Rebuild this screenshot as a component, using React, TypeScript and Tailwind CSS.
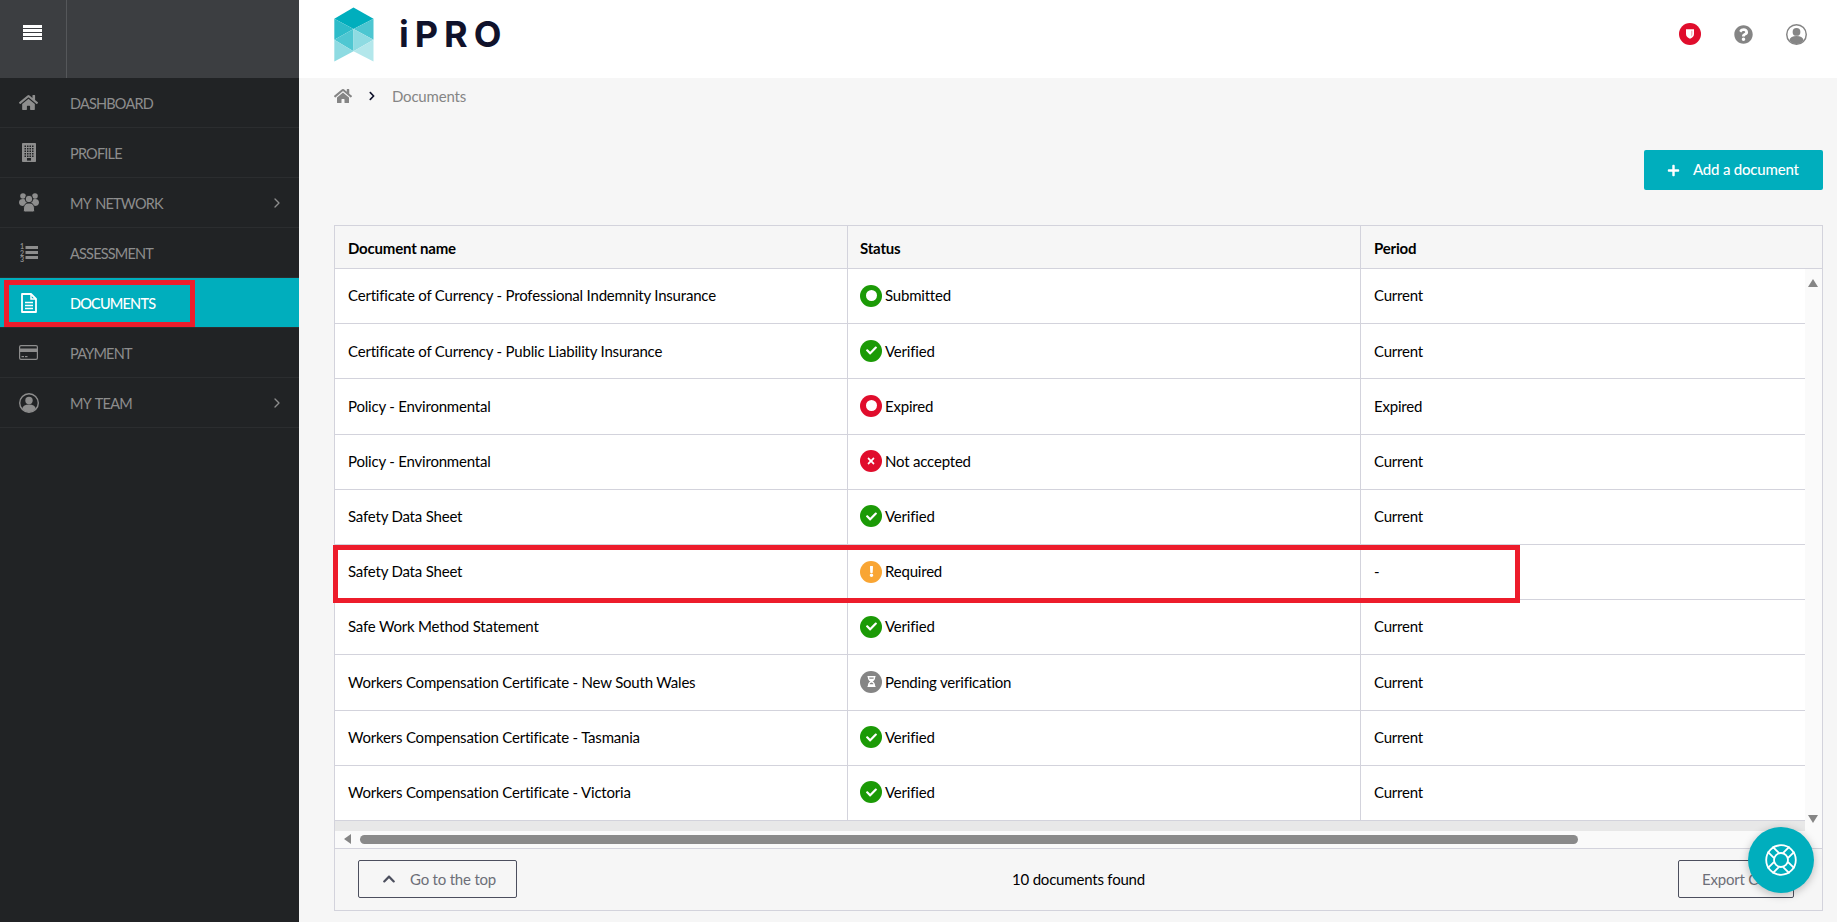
import React from 'react';
import {
  FaHome, FaChevronRight, FaPlus, FaQuestionCircle, FaCheck, FaTimes, FaExclamation,
  FaHourglassHalf, FaChevronUp,
} from 'react-icons/fa';
import { LuChevronRight } from 'react-icons/lu';

const BuildingIcon = () => {
  const windows = [];
  for (let r = 0; r < 5; r++) {
    for (let c = 0; c < 4; c++) {
      windows.push(<rect key={`${r}-${c}`} x={2.5 + c * 2.5} y={2.5 + r * 2.5} width="1.5" height="1.5" fill="#212325" />);
    }
  }
  return (
    <svg width="14" height="19" viewBox="0 0 14 19">
      <rect width="14" height="19" rx="0.8" fill="currentColor" />
      {windows}
      <rect x="5" y="15" width="4" height="2.6" fill="#212325" />
    </svg>
  );
};

const UsersIcon = () => (
  <svg width="20" height="19" viewBox="0 0 20 19" fill="currentColor">
    <circle cx="4" cy="3" r="2.8" />
    <circle cx="16" cy="3" r="2.8" />
    <path d="M0 9.5C0 7 1.5 6 4 6s4 1 4 3.5S6 13 4 13 0 12 0 9.5zM12 9.5C12 7 13.5 6 16 6s4 1 4 3.5S18 13 16 13s-4-1-4-3.500z" />
    <circle cx="10" cy="6" r="3.8" stroke="#212325" strokeWidth="1" />
    <path d="M4.500 16c0-4 2-6 5.500-6s5.500 2 5.500 6v1.500c0 1-1 1.500-2 1.500h-7c-1 0-2-.5-2-1.500z" stroke="#212325" strokeWidth="1" />
  </svg>
);

const ListIcon = () => (
  <svg width="18" height="19" viewBox="0 0 18 19" fill="currentColor">
    <rect x="5.500" y="3" width="12.500" height="3" />
    <rect x="5.500" y="8" width="12.500" height="3" />
    <rect x="5.500" y="13" width="12.500" height="3" />
    <text x="0" y="6" fontSize="7" fontWeight="700">1</text>
    <text x="0" y="12.500" fontSize="7" fontWeight="700">2</text>
    <text x="0" y="19" fontSize="7" fontWeight="700">3</text>
  </svg>
);

const FileIcon = () => (
  <svg width="16" height="20" viewBox="0 0 16 20" fill="none" stroke="currentColor">
    <path d="M1 1h9l5 5v13H1z" strokeWidth="1.800" strokeLinejoin="round" />
    <path d="M10 1v5h5" strokeWidth="1.500" />
    <path d="M4 9.500h8M4 12.500h8M4 15.500h8" strokeWidth="1.600" />
  </svg>
);

const CardIcon = () => (
  <svg width="19" height="15" viewBox="0 0 19 15" fill="currentColor">
    <path d="M2 0h15a2 2 0 0 1 2 2v11a2 2 0 0 1-2 2H2a2 2 0 0 1-2-2V2a2 2 0 0 1 2-2zm-.800 7v6c0 .5.300.800.800.800h15c.5 0 .800-.300.800-.800V7zm0-3.500h16.600V2c0-.5-.300-.800-.800-.800H2c-.5 0-.800.300-.800.800z" fillRule="evenodd" />
    <rect x="2.500" y="11" width="2.500" height="1.200" />
    <rect x="6" y="11" width="2.500" height="1.200" />
  </svg>
);

const UserIcon = ({ size = 20, bg = '#212325' }: { size?: number; bg?: string }) => (
  <svg width={size} height={size} viewBox="0 0 20 20">
    <circle cx="10" cy="10" r="9.300" fill={bg} stroke="currentColor" strokeWidth="1.400" />
    <circle cx="10" cy="7.500" r="3.700" fill="currentColor" />
    <path d="M3.200 15.500c.8-2.800 3-4 6.800-4s6 1.200 6.800 4c-1.600 2.200-4 3.500-6.800 3.500s-5.200-1.300-6.800-3.500z" fill="currentColor" />
  </svg>
);

const LifeRing = () => (
  <svg width="34" height="34" viewBox="0 0 34 34" fill="none" stroke="white" strokeWidth="1.800">
    <circle cx="17" cy="17" r="14.800" />
    <circle cx="17" cy="17" r="7" />
    {[45, 135, 225, 315].map((a) => (
      <path key={a} d="M13.500 10.800V1.500M20.500 10.800V1.500" transform={`rotate(${a} 17 17)`} />
    ))}
  </svg>
);

const navItems = [
  { label: 'DASHBOARD', icon: <FaHome size={19} /> },
  { label: 'PROFILE', icon: <BuildingIcon /> },
  { label: 'MY NETWORK', icon: <UsersIcon />, more: true },
  { label: 'ASSESSMENT', icon: <ListIcon /> },
  { label: 'DOCUMENTS', icon: <FileIcon />, active: true },
  { label: 'PAYMENT', icon: <CardIcon /> },
  { label: 'MY TEAM', icon: <UserIcon />, more: true },
];

type Status = 'submitted' | 'verified' | 'expired' | 'rejected' | 'required' | 'pending';

const rows: { name: string; status: Status; label: string; period: string }[] = [
  { name: 'Certificate of Currency - Professional Indemnity Insurance', status: 'submitted', label: 'Submitted', period: 'Current' },
  { name: 'Certificate of Currency - Public Liability Insurance', status: 'verified', label: 'Verified', period: 'Current' },
  { name: 'Policy - Environmental', status: 'expired', label: 'Expired', period: 'Expired' },
  { name: 'Policy - Environmental', status: 'rejected', label: 'Not accepted', period: 'Current' },
  { name: 'Safety Data Sheet', status: 'verified', label: 'Verified', period: 'Current' },
  { name: 'Safety Data Sheet', status: 'required', label: 'Required', period: '-' },
  { name: 'Safe Work Method Statement', status: 'verified', label: 'Verified', period: 'Current' },
  { name: 'Workers Compensation Certificate - New South Wales', status: 'pending', label: 'Pending verification', period: 'Current' },
  { name: 'Workers Compensation Certificate - Tasmania', status: 'verified', label: 'Verified', period: 'Current' },
  { name: 'Workers Compensation Certificate - Victoria', status: 'verified', label: 'Verified', period: 'Current' },
];

const StatusIcon = ({ status }: { status: Status }) => {
  if (status === 'submitted' || status === 'expired') {
    return (
      <span className={`w-[22px] h-[22px] rounded-full flex items-center justify-center ${status === 'submitted' ? 'bg-[#1b9a06]' : 'bg-[#e00d2c]'}`}>
        <span className="w-[11px] h-[11px] rounded-full bg-white" />
      </span>
    );
  }
  const bg = {
    verified: 'bg-[#1b9a06]',
    rejected: 'bg-[#e00d2c]',
    required: 'bg-[#f9a533]',
    pending: 'bg-[#858585]',
  }[status];
  return (
    <span className={`w-[22px] h-[22px] rounded-full flex items-center justify-center text-white ${bg}`}>
      {status === 'verified' && <FaCheck size={11} />}
      {status === 'rejected' && <FaTimes size={10} />}
      {status === 'required' && <FaExclamation size={11} />}
      {status === 'pending' && <FaHourglassHalf size={11} />}
    </span>
  );
};

const Logo = () => (
  <svg width="40" height="55" viewBox="334 6.5 40 55" className="shrink-0">
    <polygon points="353.5,7 373.5,18.3 353.5,28.5 334.3,18.3" fill="#00aebd" />
    <polygon points="334.3,18.3 353.5,28.5 334.3,39.3" fill="#2dbcc9" />
    <polygon points="373.5,18.3 353.5,28.5 373.5,39.3" fill="#4dc6d1" />
    <polygon points="353.5,28.5 334.3,39.3 353.5,50.7" fill="#4fc7d2" />
    <polygon points="353.5,28.5 373.5,39.3 353.5,50.7" fill="#8edbe2" />
    <polygon points="334.3,39.3 353.5,50.7 334.3,61" fill="#8edbe2" />
    <polygon points="373.5,39.3 353.5,50.7 373.5,61" fill="#b3e7eb" />
  </svg>
);

const Sidebar = () => (
  <aside className="w-[299px] shrink-0 bg-[#212325] flex flex-col">
    <div className="h-[78px] flex bg-[#3c3e41]">
      <div className="w-[67px] border-r border-[#55575a] flex items-center justify-center pr-[1px] pb-[13px]">
        <div className="w-[19px] flex flex-col gap-[1px]">
          <div className="h-[3px] bg-white" />
          <div className="h-[3px] bg-white" />
          <div className="h-[3px] bg-white" />
          <div className="h-[3px] bg-white" />
        </div>
      </div>
    </div>
    {navItems.map((item) => (
      <div
        key={item.label}
        className={`relative h-[50px] flex items-center border-b border-[#2b2d2f] ${
          item.active ? 'bg-[#00aebd] text-white font-medium' : 'text-[#8d8d8d]'
        }`}
      >
        <span className="w-[70px] flex justify-center pr-[13px] shrink-0">{item.icon}</span>
        <span className="text-[14.5px] tracking-[-0.8px] [word-spacing:2px] pt-[2px]">{item.label}</span>
        {item.more && <LuChevronRight size={16} className="absolute right-[14px]" />}
        {item.active && (
          <div className="absolute left-[4px] top-[2px] w-[191px] h-[47px] border-[5px] border-[#ed1c2b]" />
        )}
      </div>
    ))}
  </aside>
);

export default function App() {
  return (
    <div className="relative flex h-[922px] overflow-hidden bg-[#f6f6f6] font-[Lato,sans-serif] text-[15px] tracking-[-0.2px] text-black">
      <Sidebar />
      <main className="flex-1 min-w-0 flex flex-col">
        <header className="h-[78px] bg-white flex items-center pl-[35px] pr-[30px] pb-[10px]">
          <Logo />
          <span className="ml-[25px] text-[36px] font-[Inter,sans-serif] font-bold tracking-[6px] text-[#10122b]">iPRO</span>
          <div className="ml-auto flex items-center gap-[33px] text-[#858585]">
            <span className="w-[22px] h-[22px] rounded-full bg-[#e00d2c] flex items-center justify-center">
              <svg width="8" height="10" viewBox="0 0 10 12">
                <path d="M0 0h10v6c0 3-2.500 4.800-5 6-2.500-1.200-5-3-5-6z" fill="white" />
                <path d="M6.500 2h1.500v4c0 1.300-.7 2.300-1.500 3z" fill="#f2a3ae" />
              </svg>
            </span>
            <FaQuestionCircle size={19} />
            <UserIcon size={21} bg="white" />
          </div>
        </header>

        <div className="h-[36px] flex items-center pl-[35px] text-[#858585]">
          <FaHome size={18} />
          <FaChevronRight size={10} className="ml-[15px] text-[#10122b]" />
          <span className="ml-[15px]">Documents</span>
        </div>

        <div className="flex flex-col flex-1 pl-[35px] pr-[14px] pb-[11px]">
          <div className="flex justify-end mt-[36px] mb-[35px]">
            <button className="h-[40px] w-[179px] rounded-[2px] bg-[#00aebd] text-white font-medium flex items-center pl-[23px]">
              <FaPlus size={13} />
              <span className="ml-[13px] pb-[1px]">Add a document</span>
            </button>
          </div>

          <section className="flex-1 flex flex-col border border-[#d3d3dc]">
            <div className="h-[43px] flex items-center font-bold border-b border-[#d3d3dc] shrink-0">
              <div className="w-[513px] h-full flex items-center pl-[13px] pt-[2px] border-r border-[#d3d3dc]">Document name</div>
              <div className="w-[513px] h-full flex items-center pl-[12px] pt-[2px] border-r border-[#d3d3dc]">Status</div>
              <div className="pl-[13px] pt-[2px]">Period</div>
            </div>

            <div className="flex shrink-0">
              <div className="flex-1 min-w-0 flex flex-col">
                {rows.map((row, i) => (
                  <div key={i} className="relative h-[55.2px] flex items-center bg-white border-b border-[#d3d3dc]">
                    <div className="w-[513px] h-full flex items-center pl-[13px] pb-[1px] border-r border-[#d3d3dc]">{row.name}</div>
                    <div className="w-[513px] h-full flex items-center gap-[3px] pl-[12px] pb-[1px] border-r border-[#d3d3dc]">
                      <StatusIcon status={row.status} />
                      <span>{row.label}</span>
                    </div>
                    <div className="pl-[13px] pb-[1px]">{row.period}</div>
                    {row.status === 'required' && (
                      <div className="absolute z-10 left-[-2px] top-0 w-[1187px] h-[58px] border-[5px] border-[#ed1c2b]" />
                    )}
                  </div>
                ))}
                <div className="h-[10px] bg-[#e8e8e8]" />
              </div>
              <div className="relative w-[17px] bg-[#fafafa] shrink-0">
                <div className="absolute left-[3px] top-[10px] w-0 h-0 border-x-[5px] border-x-transparent border-b-[8px] border-b-[#858585]" />
                <div className="absolute left-[3px] bottom-[8px] w-0 h-0 border-x-[5px] border-x-transparent border-t-[8px] border-t-[#858585]" />
              </div>
            </div>

            <div className="h-[17px] shrink-0 bg-[#fafafa] flex items-center pl-[9px] border-b border-[#d3d3dc] box-content">
              <div className="w-0 h-0 border-y-[5px] border-y-transparent border-r-[7px] border-r-[#858585]" />
              <div className="ml-[9px] w-[1218px] h-[9px] rounded-full bg-[#8a8a8a]" />
            </div>

            <div className="flex-1 grid grid-cols-3 items-center pl-[23px] pr-[28px]">
              <button className="justify-self-start h-[38px] w-[159px] border border-[#4c4f5e] rounded-[2px] flex items-center pl-[23px] text-[#6d6f78]">
                <FaChevronUp size={14} className="text-[#4c4f5e]" />
                <span className="ml-[14px]">Go to the top</span>
              </button>
              <span className="justify-self-center ml-[5px]">10 documents found</span>
              <button className="justify-self-end h-[38px] w-[116px] border border-[#4c4f5e] rounded-[2px] text-left pl-[23px] text-[#6d6f78]">
                Export CSV
              </button>
            </div>
          </section>
        </div>
      </main>

      <button className="absolute left-[1748px] top-[827px] w-[66px] h-[66px] rounded-full bg-[#00aebd] flex items-center justify-center shadow-[0_2px_8px_rgba(0,0,0,0.25)]">
        <LifeRing />
      </button>
    </div>
  );
}
